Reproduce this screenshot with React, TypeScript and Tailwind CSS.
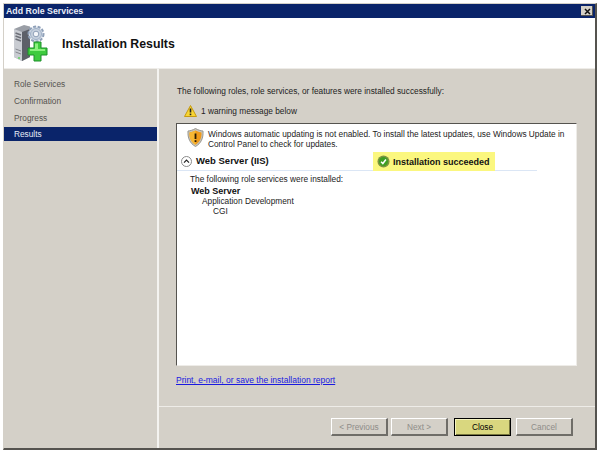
const navItems = ["Role Services", "Confirmation", "Progress"];

function ServerIcon() {
  return (
    <svg width="36" height="38" viewBox="0 0 36 38" className="shrink-0">
      <path d="M1 5 L11 1 L17 2.5 L17 33 L9 37 L1 33 Z" fill="#9a9ea6" />
      <path d="M1 5 L9 8 L9 37 L1 33 Z" fill="#c9ccd2" />
      <path d="M9 8 L17 5 L17 33 L9 37 Z" fill="#5d6068" />
      <path d="M2.5 9 L8 11 M2.5 12 L8 14 M2.5 15 L8 17" stroke="#6d7078" strokeWidth="1.5" />
      <path d="M2.5 25 L8 27 M2.5 28 L8 30" stroke="#85888f" strokeWidth="1" />
      <circle cx="6" cy="34" r="1" fill="#5fd35f" />
      <circle cx="23" cy="10" r="7.5" fill="#dfe5ee" stroke="#8fa0b8" strokeWidth="2" strokeDasharray="3 1.6" />
      <circle cx="23" cy="10" r="5.5" fill="#c6d0de" stroke="#9fb0c6" />
      <circle cx="23" cy="10" r="2.8" fill="#f4f6fa" stroke="#8fa0b8" />
      <path
        d="M21 18 H28 V24 H34 V31 H28 V37 H21 V31 H15 V24 H21 Z"
        fill="#3ecb3e"
        stroke="#1c8f2a"
        strokeWidth="1"
      />
      <path d="M22 19.5 H25 V25 H32 V27 H17 V25 H22 Z" fill="#8cf07e" />
    </svg>
  );
}

function WarningIcon() {
  return (
    <svg width="13" height="12" viewBox="0 0 13 12" className="shrink-0">
      <path d="M6.5 0.5 L12.5 11.5 H0.5 Z" fill="#f8d533" stroke="#c79a12" strokeLinejoin="round" />
      <path d="M6.5 3.5 V7.5" stroke="#222" strokeWidth="1.6" />
      <rect x="5.7" y="8.6" width="1.6" height="1.6" fill="#222" />
    </svg>
  );
}

function ShieldIcon() {
  return (
    <svg width="17" height="19" viewBox="0 0 17 19" className="shrink-0">
      <path d="M8.5 0.5 C11 2 13.5 2.8 16 3 C16.5 10 14 15.5 8.5 18.5 C3 15.5 0.5 10 1 3 C3.5 2.8 6 2 8.5 0.5 Z" fill="#c9c6bd" stroke="#9a978e" />
      <path d="M8.5 2.5 C10.5 3.6 12.5 4.2 14.5 4.4 C14.8 10 12.8 14 8.5 16.8 C4.2 14 2.2 10 2.5 4.4 C4.5 4.2 6.5 3.6 8.5 2.5 Z" fill="#f09a1a" />
      <path d="M8.5 2.5 V16.8 C4.2 14 2.2 10 2.5 4.4 C4.5 4.2 6.5 3.6 8.5 2.5 Z" fill="#f7b733" />
      <path d="M8.5 5.5 V11" stroke="#2a1a00" strokeWidth="1.8" />
      <rect x="7.6" y="12.2" width="1.8" height="1.8" fill="#2a1a00" />
    </svg>
  );
}

function CheckIcon() {
  return (
    <svg width="13" height="13" viewBox="0 0 14 14" className="shrink-0">
      <circle cx="7" cy="7" r="6.5" fill="#7d9440" />
      <circle cx="7" cy="7" r="4.8" fill="#3f9e22" />
      <path d="M4.4 7.2 L6.3 9.2 L9.6 4.8" fill="none" stroke="#fff" strokeWidth="1.6" />
    </svg>
  );
}

function CollapseIcon() {
  return (
    <svg width="11" height="11" viewBox="0 0 11 11" className="shrink-0">
      <circle cx="5.5" cy="5.5" r="5" fill="#fff" stroke="#8a8a8a" />
      <path d="M3 6.6 L5.5 4 L8 6.6" fill="none" stroke="#222" strokeWidth="1.2" />
    </svg>
  );
}

function WizardButton({ label, primary }: { label: string; primary?: boolean }) {
  return (
    <div
      className={
        primary
          ? "flex h-[18px] w-[57px] items-center justify-center border border-black bg-[#d9d77f] text-[8.3px] text-black shadow-[inset_1px_1px_0_#f4f3c0,inset_-1px_-1px_0_#77763f]"
          : "flex h-[18px] w-[57px] items-center justify-center border-t border-l border-t-white border-l-white border-r-2 border-b-2 border-r-[#6f6d68] border-b-[#6f6d68] bg-[#d4d0c8] text-[8.3px] text-[#8f8d88]"
      }
    >
      {label}
    </div>
  );
}

export default function App() {
  return (
    <div className="h-[453px] w-[600px] bg-white pt-[3px] pl-[3px] font-['Liberation_Sans',sans-serif] text-[8.3px] leading-[10px] text-[#222]">
      <div className="flex h-[447px] w-[594px] flex-col border-r-2 border-b-2 border-r-[#55534f] border-b-[#55534f] border-l border-t border-l-[#d4d0c8] border-t-[#d4d0c8]">
        <div className="flex h-[14px] shrink-0 items-center justify-between bg-[#0a246a] pr-[2px] pl-[2px]">
          <span className="text-[8.8px] font-bold text-[#e8ecf6]">Add Role Services</span>
          <div className="flex h-[10px] w-[12px] items-center justify-center bg-[#d4d0c8] shadow-[inset_-1px_-1px_0_#55534f]">
            <svg width="7" height="7" viewBox="0 0 7 7">
              <path d="M1 1 L6 6 M6 1 L1 6" stroke="#111" strokeWidth="1.5" />
            </svg>
          </div>
        </div>

        <div className="flex h-[50px] shrink-0 items-center gap-[13px] bg-white pl-[9px]">
          <ServerIcon />
          <span className="pt-[2px] text-[12.3px] font-bold text-[#111]">Installation Results</span>
        </div>

        <div className="flex min-h-0 flex-1 bg-[#d4d0c8]">
          <div className="w-[153px] shrink-0 border-t border-t-[#eeece8] pt-[6px]">
            {navItems.map((item) => (
              <div key={item} className="flex h-[17px] items-center pl-[10px] text-[#55534f]">
                {item}
              </div>
            ))}
            <div className="mt-[1px] flex h-[14px] items-center bg-[#0a246a] pl-[10px] text-[#e8ecf6]">Results</div>
          </div>

          <div className="flex min-w-0 flex-1 flex-col border-t border-l-2 border-t-[#eeece8] border-l-[#f4f3f0]">
            <div className="flex min-h-0 flex-1 flex-col pt-[17px] pl-[17px]">
              <p className="pl-[1px]">The following roles, role services, or features were installed successfully:</p>
              <div className="mt-[9px] flex items-center gap-[4px] pl-[8px]">
                <WarningIcon />
                <span>1 warning message below</span>
              </div>

              <div className="mt-[6px] h-[243px] w-[401px] border border-t-[#55534f] border-l-[#55534f] border-r-[#eeece8] border-b-[#eeece8] bg-white">
                <div className="flex gap-[4px] pt-[4px] pl-[10px]">
                  <ShieldIcon />
                  <p className="w-[380px] pt-[1px]">
                    Windows automatic updating is not enabled. To install the latest updates, use Windows Update in
                    Control Panel to check for updates.
                  </p>
                </div>
                <div className="mt-[3px] flex h-[19px] w-[360px] items-center border-b border-b-[#dbe6f5] pl-[4px]">
                  <CollapseIcon />
                  <span className="ml-[4px] w-[177px] text-[9.5px] font-bold text-[#111]">Web Server (IIS)</span>
                  <div className="flex h-[19px] items-center gap-[3px] self-start bg-[#fbf77f] pr-[5px] pl-[4px]">
                    <CheckIcon />
                    <span className="text-[9px] font-bold text-[#111]">Installation succeeded</span>
                  </div>
                </div>
                <p className="mt-[3px] pl-[13px]">The following role services were installed:</p>
                <p className="mt-[2px] pl-[14px] text-[9px] font-bold text-[#111]">Web Server</p>
                <p className="pl-[25px]">Application Development</p>
                <p className="pl-[36px]">CGI</p>
              </div>

              <a className="mt-[9px] text-[8.5px] text-[#1a1ae0] underline">Print, e-mail, or save the installation report</a>
            </div>

            <div className="flex h-[42px] shrink-0 justify-end gap-[3px] border-t border-t-[#eeece8] pt-[11px] pr-[22px]">
              <WizardButton label="< Previous" />
              <WizardButton label="Next >" />
              <div className="ml-[3px]">
                <WizardButton label="Close" primary />
              </div>
              <div className="ml-[2px]">
                <WizardButton label="Cancel" />
              </div>
            </div>
          </div>
        </div>
      </div>
    </div>
  );
}
